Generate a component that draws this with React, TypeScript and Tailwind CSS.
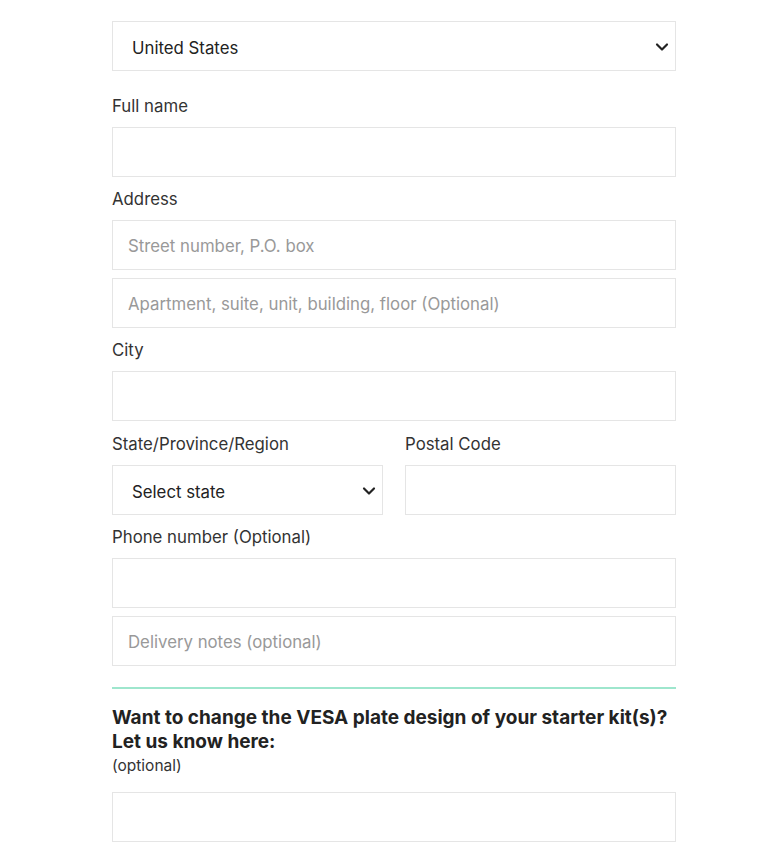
import { ChevronDown } from "lucide-react"

const inputCls =
   "block w-full h-[50px] border border-[#e5e5e5] bg-white px-[15px] pt-[2px] text-[16.8px] text-[#333] placeholder:text-[#999] outline-none"

const Label = ({ children }: { children: React.ReactNode }) => (
   <label className="block pt-[1px] text-[16.8px] leading-[24px] text-[#333] mb-[9px]">{children}</label>
)

const Select = ({ value }: { value: string }) => (
   <div className="relative h-[50px] w-full border border-[#e5e5e5] bg-white flex items-center pl-[19px] pr-[3px]">
      <span className="flex-1 pt-[5px] text-[16.8px] text-[#222]">{value}</span>
      <ChevronDown size={20} strokeWidth={2.6} className="text-[#222] mt-[1px]" />
   </div>
)

export default function App() {
   return (
      <div className="min-h-screen bg-white font-['Inter',sans-serif]">
         <div className="w-[564px] ml-[112px] pt-[21px] pb-[26px]">
            <Select value="United States" />

            <div className="mt-[22px]">
               <Label>Full name</Label>
               <input className={inputCls} />
            </div>

            <div className="mt-[9px]">
               <Label>Address</Label>
               <input className={inputCls} placeholder="Street number, P.O. box" />
               <input className={`${inputCls} mt-[8px]`} placeholder="Apartment, suite, unit, building, floor (Optional)" />
            </div>

            <div className="mt-[9px]">
               <Label>City</Label>
               <input className={inputCls} />
            </div>

            <div className="mt-[10px] grid grid-cols-2 gap-[22px]">
               <div>
                  <Label>State/Province/Region</Label>
                  <Select value="Select state" />
               </div>
               <div>
                  <Label>Postal Code</Label>
                  <input className={inputCls} />
               </div>
            </div>

            <div className="mt-[9px]">
               <Label>Phone number (Optional)</Label>
               <input className={inputCls} />
               <input className={`${inputCls} mt-[8px]`} placeholder="Delivery notes (optional)" />
            </div>

            <div className="mt-[21px] h-[2px] bg-[#9ee6cd]" />

            <h3 className="mt-[17px] text-[19px] leading-[24px] font-bold text-[#222]">
               Want to change the VESA plate design of your starter kit(s)? Let us know here:
            </h3>
            <p className="text-[15.5px] leading-[24px] text-[#333]">(optional)</p>

            <input className={`${inputCls} mt-[14px]`} />
         </div>
      </div>
   )
}
